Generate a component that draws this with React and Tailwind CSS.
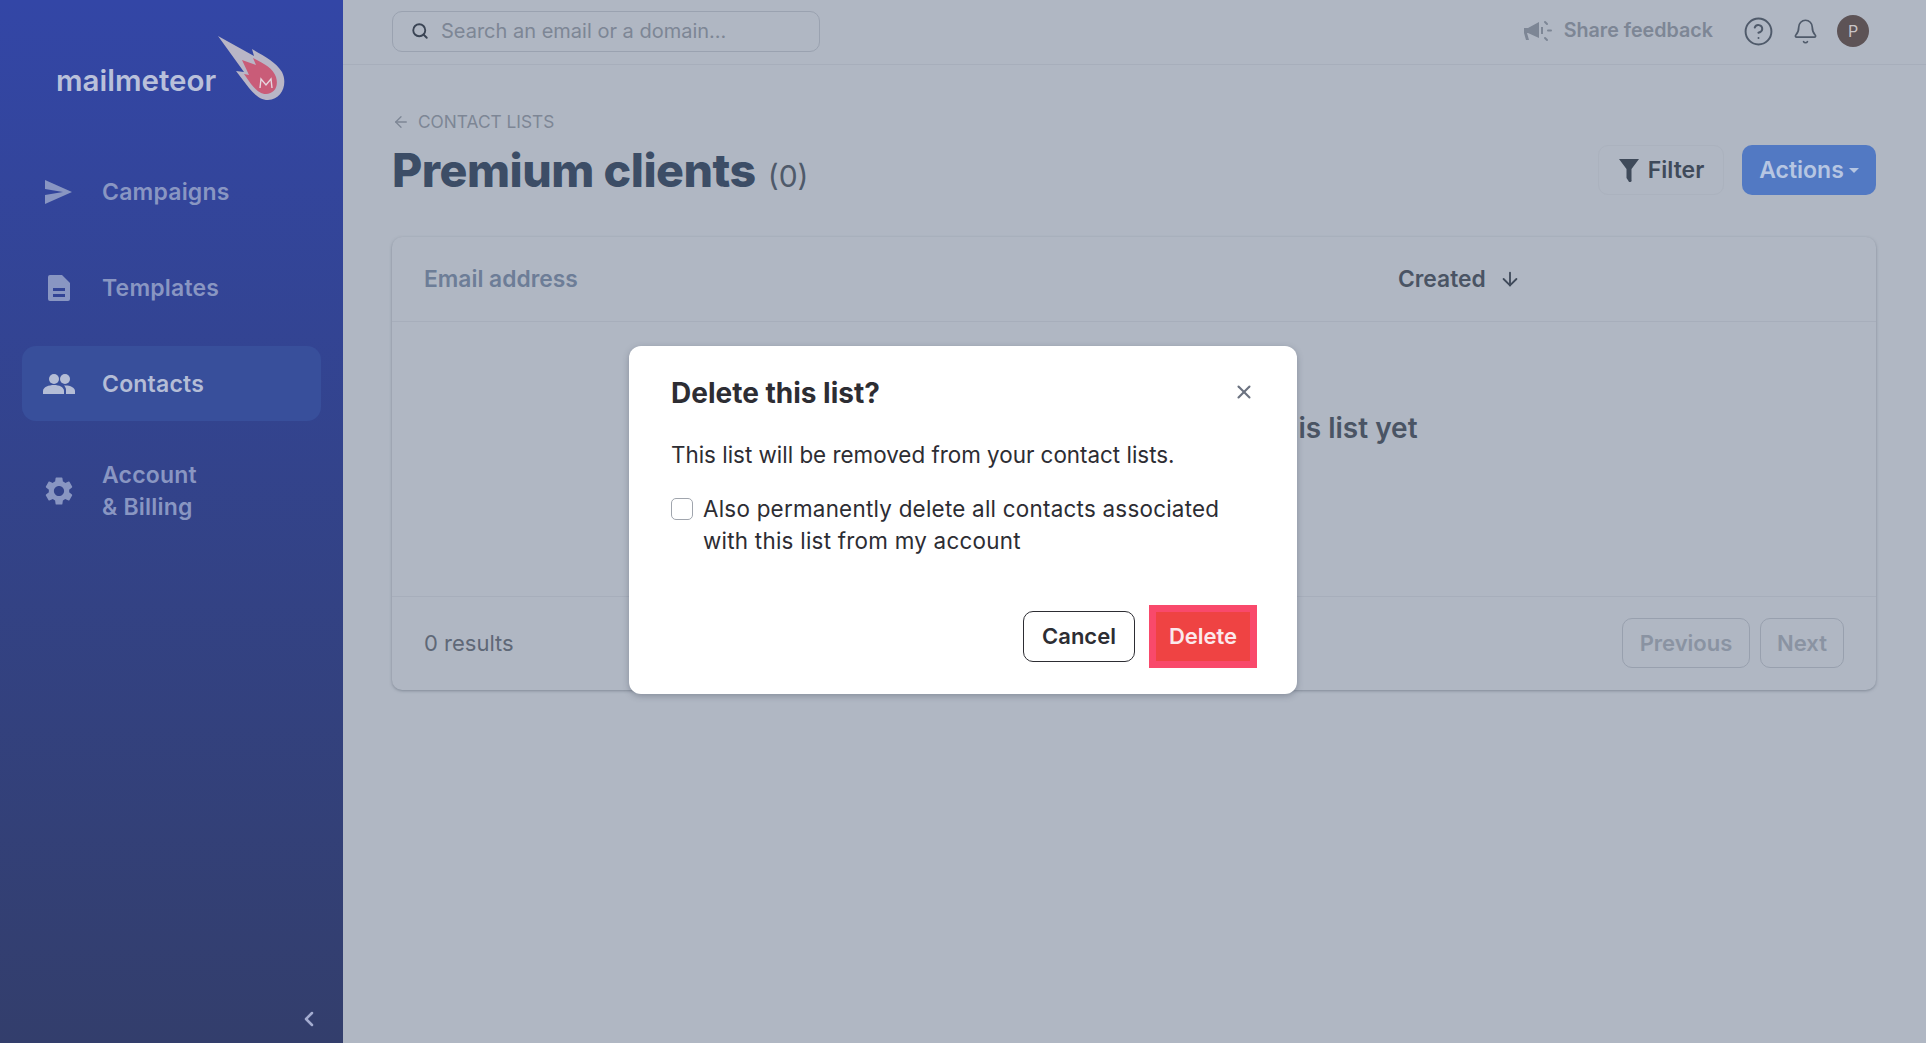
import React from 'react';
import { ArrowLeft, ArrowDown, ChevronLeft, CircleHelp, Bell, X, Search } from 'lucide-react';

const font = { fontFamily: 'Inter, "Noto Sans", sans-serif' };

const NavItem = ({ icon, active, tall, children }) => (
  <div
    className={`mb-[21px] flex items-center rounded-[14px] pl-[20px] text-[23px] font-semibold leading-[32px] tracking-[0.2px] ${
      tall ? 'h-[97px]' : 'h-[75px]'
    } ${active ? 'bg-[#384f9b] text-[#b4bdd6]' : 'text-[#8996c2]'}`}
  >
    <span className="flex w-[34px] justify-center">{icon}</span>
    <span className="ml-[26px]">{children}</span>
  </div>
);

const Logo = () => (
  <svg width="72" height="72" viewBox="0 0 72 72">
    <path d="M2 2 L38 22 L36 15 C48 22 60 28 66 38 C72 50 66 66 52 66 C44 66 38 60 33 54 L20 37 L28 38 Z" fill="#b9b6c6" />
    <path d="M26 26 L40 31 L37 24 C48 30 57 34 60 43 C63 53 58 60 50 60 C44 60 39 55 35 50 L28 40 L33 41 Z" fill="#c95c78" />
    <path d="M44 54 L45 45 L50 51 L55 45 L56 54" fill="none" stroke="#e6d6de" strokeWidth="1.4" />
  </svg>
);

export default function App() {
  return (
    <div style={font} className="relative flex h-[1043px] w-[1926px] overflow-hidden bg-[#b0b7c3]">
      <aside className="flex w-[343px] shrink-0 flex-col bg-gradient-to-b from-[#3346a6] to-[#333e6c] px-[22px]">
        <div className="flex h-[124px] items-center pl-[34px] pt-[36px]">
          <span className="text-[29.5px] font-semibold text-[#b9c0da]">mailmeteor</span>
          <span className="-mt-[20px]"><Logo /></span>
        </div>
        <nav className="mt-[30px]">
          <NavItem
            icon={<svg width="28" height="24" viewBox="0 0 28 24" fill="#8996c2"><path d="M0 0 L27 12 L0 24 L0 15 L18 12 L0 9 Z" /></svg>}
          >
            Campaigns
          </NavItem>
          <NavItem
            icon={<svg width="24" height="28" viewBox="0 0 24 28" fill="#8996c2"><path fillRule="evenodd" d="M3 1 H15 L23 9 V25 a2 2 0 0 1 -2 2 H3 a2 2 0 0 1 -2 -2 V3 a2 2 0 0 1 2 -2 Z M6 14 V17 H18 V14 Z M6 20 V23 H18 V20 Z" /></svg>}
          >
            Templates
          </NavItem>
          <NavItem
            active
            icon={<svg width="32" height="20" viewBox="0 0 32 20" fill="#b4bdd6"><circle cx="11" cy="5" r="5" /><circle cx="22" cy="5" r="5" /><path d="M0 20 V17 C0 13 6 11 11 11 C16 11 21 13 21 17 V20 Z" /><path d="M23 20 V16 C23 14 22 12.5 21 11.5 C26 11 32 13 32 17 V20 Z" /></svg>}
          >
            Contacts
          </NavItem>
          <NavItem
            tall
            icon={<svg width="34" height="34" viewBox="0 0 24 24" fill="#8996c2"><path d="M19.14 12.94c.04-.3.06-.61.06-.94 0-.32-.02-.64-.07-.94l2.03-1.58a.49.49 0 0 0 .12-.61l-1.92-3.32a.488.488 0 0 0-.59-.22l-2.39.96c-.5-.38-1.03-.7-1.62-.94l-.36-2.54a.484.484 0 0 0-.48-.41h-3.84c-.24 0-.43.17-.47.41l-.36 2.54c-.59.24-1.13.57-1.62.94l-2.39-.96c-.22-.08-.47 0-.59.22L2.74 8.87c-.12.21-.08.47.12.61l2.03 1.58c-.05.3-.09.63-.09.94s.02.64.07.94l-2.03 1.58a.49.49 0 0 0-.12.61l1.92 3.32c.12.22.37.29.59.22l2.39-.96c.5.38 1.03.7 1.62.94l.36 2.54c.05.24.24.41.48.41h3.84c.24 0 .44-.17.47-.41l.36-2.54c.59-.24 1.13-.56 1.62-.94l2.39.96c.22.08.47 0 .59-.22l1.92-3.32c.12-.22.07-.47-.12-.61l-2.01-1.58zM12 15.6c-1.98 0-3.6-1.62-3.6-3.6s1.62-3.6 3.6-3.6 3.6 1.62 3.6 3.6-1.62 3.6-3.6 3.6z" /></svg>}
          >
            <span className="block">Account</span>
            <span className="block">&amp; Billing</span>
          </NavItem>
        </nav>
        <div className="mt-auto flex justify-end pb-[12px]">
          <ChevronLeft size={24} strokeWidth={2.5} className="text-[#a3acd0]" />
        </div>
      </aside>

      <main className="flex min-w-0 flex-1 flex-col">
        <header className="flex h-[65px] shrink-0 items-center justify-between border-b border-[#a7aebb] pb-[2px] pl-[49px] pr-[57px]">
          <div className="flex h-[41px] w-[428px] items-center rounded-[10px] border border-[#9aa2b0] pl-[18px]">
            <Search size={18} strokeWidth={2.5} className="text-[#3a4454]" />
            <span className="ml-[12px] text-[20px] text-[#7d8695]">Search an email or a domain...</span>
          </div>
          <div className="flex items-center">
            <svg width="28" height="22" viewBox="0 0 28 22" fill="#7d8695">
              <path d="M0 8 H4 L15 2 V18 L4 13 H3 L5 20 H2 L0 13 Z" />
              <path d="M18 7 V14" stroke="#7d8695" strokeWidth="2" />
              <path d="M21 2 L23 4 M24 10.5 H27 M21 18 L23 20" stroke="#7d8695" strokeWidth="2" strokeLinecap="round" />
            </svg>
            <span className="ml-[12px] text-[19.7px] font-semibold text-[#7d8695]">Share feedback</span>
            <CircleHelp size={31} strokeWidth={1.5} className="ml-[30px] text-[#4f5a6a]" />
            <Bell size={27} strokeWidth={1.5} className="ml-[18px] text-[#4f5a6a]" />
            <span className="ml-[18px] flex h-[32px] w-[32px] items-center justify-center rounded-full bg-[#5d5356] text-[16px] text-[#c9c4c6]">P</span>
          </div>
        </header>

        <div className="flex flex-col pl-[49px] pr-[50px] pt-[44px]">
          <div className="flex items-center text-[17.3px] text-[#7d8695]">
            <ArrowLeft size={18} strokeWidth={1.75} />
            <span className="ml-[8px]">CONTACT LISTS</span>
          </div>
          <div className="mt-[7px] flex items-center justify-between">
            <div className="flex items-baseline">
              <h1 className="text-[46.5px] font-extrabold leading-[56px] tracking-[-0.5px] text-[#3c4d66]">Premium clients</h1>
              <span className="ml-[12px] text-[30px] text-[#4f5a6a]">(0)</span>
            </div>
            <div className="flex items-center">
              <button className="flex h-[50px] w-[126px] items-center justify-center rounded-[10px] border border-[#abb2be] text-[23px] font-semibold text-[#3f4a5a]">
                <svg width="22" height="24" viewBox="0 0 22 24" fill="#3f4a5a"><path d="M1 1 H21 L13.5 11 V22 a1.5 1.5 0 0 1 -3 1 L8.5 20 V11 Z" /></svg>
                <span className="ml-[8px]">Filter</span>
              </button>
              <button className="ml-[18px] flex h-[50px] w-[134px] items-center justify-center rounded-[10px] bg-[#5279c3] text-[23px] font-semibold text-[#b6c6e2]">
                Actions
                <span className="ml-[5px] h-0 w-0 border-x-[5px] border-t-[5px] border-x-transparent border-t-[#b6c6e2]" />
              </button>
            </div>
          </div>

          <section className="mt-[38px] flex h-[453px] flex-col rounded-[10px] shadow-[0_1px_3px_rgba(90,100,115,0.55)]">
            <div className="flex h-[85px] shrink-0 items-center border-b border-[#a7aebb] pl-[32px] text-[22.8px] font-semibold">
              <span className="w-[974px] text-[#6d7d97]">Email address</span>
              <span className="text-[#4a5464]">Created</span>
              <ArrowDown size={22} strokeWidth={2} className="ml-[13px] text-[#3f4a5a]" />
            </div>
            <div className="flex flex-1 justify-center pt-[85px] text-[28px] font-semibold text-[#4a5464]">
              <span>You don't have any contacts in this list yet</span>
            </div>
            <div className="flex h-[94px] shrink-0 items-center justify-between border-t border-[#a7aebb] px-[32px]">
              <span className="text-[22px] text-[#5f6877]">0 results</span>
              <div className="flex gap-[10px] text-[22px] font-semibold text-[#8a93a2]">
                <button className="h-[50px] w-[128px] rounded-[10px] border border-[#98a0ae]">Previous</button>
                <button className="h-[50px] w-[84px] rounded-[10px] border border-[#98a0ae]">Next</button>
              </div>
            </div>
          </section>
        </div>
      </main>

      <div className="absolute left-[629px] top-[346px] h-[348px] w-[668px] rounded-[12px] bg-white pl-[42px] pr-[40px] pt-[27px] shadow-[0_2px_6px_rgba(60,70,85,0.35)]">
        <div className="flex items-center justify-between">
          <h2 className="text-[28px] font-bold leading-[40px] text-[#2d2d33]">Delete this list?</h2>
          <X size={22} strokeWidth={2.25} className="mr-[2px] -mt-[2px] text-[#6b7280]" />
        </div>
        <p className="mt-[26px] text-[22.4px] leading-[32px] text-[#2d2d33]">This list will be removed from your contact lists.</p>
        <div className="mt-[22px] flex items-start">
          <span className="mt-[5px] h-[22px] w-[22px] shrink-0 rounded-[5px] border-[1.5px] border-[#a0a5ad] bg-white" />
          <span className="ml-[10px] w-[570px] text-[22.4px] leading-[32px] tracking-[0.25px] text-[#2d2d33]">
            Also permanently delete all contacts associated with this list from my account
          </span>
        </div>
        <div className="mt-[48px] flex items-center justify-end">
          <button className="h-[51px] w-[112px] rounded-[10px] border-[1.5px] border-[#2d2d33] text-[22px] font-semibold text-[#2d2d33]">Cancel</button>
          <button className="ml-[14px] h-[63px] w-[108px] border-[7px] border-[#f9496b] bg-[#ef4343] text-[22px] font-semibold text-[#fbe9ec]">Delete</button>
        </div>
      </div>
    </div>
  );
}
